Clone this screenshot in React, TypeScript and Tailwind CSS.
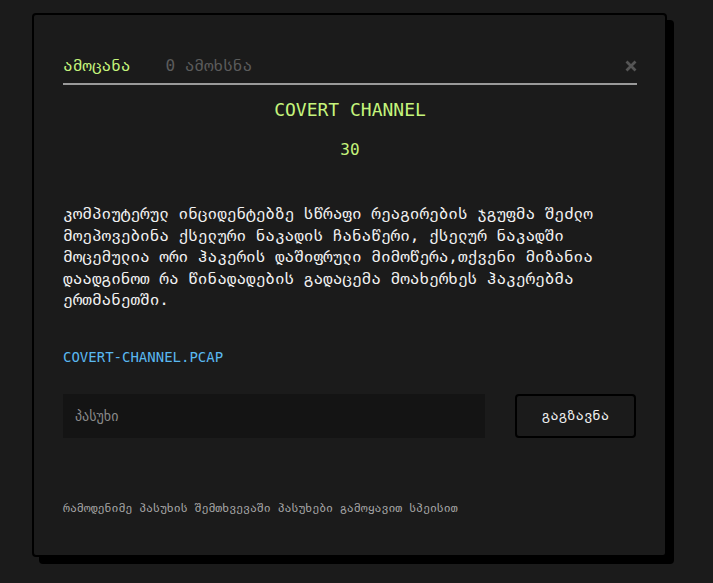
import React from "react";

const mono = { fontFamily: '"DejaVu Sans Mono", "Liberation Mono", monospace' };

const App = () => {
  return (
    <div className="min-h-screen w-full bg-[#1b1b1b] pt-[13px] pl-[32px]" style={mono}>
      {/* modal */}
      <div className="w-[635px] h-[544px] rounded-[4px] border-2 border-black bg-[#1b1b1b] shadow-[7px_7px_0_0_#000] pl-[29px] pr-[28px] pt-[39px]">
        {/* tabs */}
        <div className="flex items-center justify-between border-b-2 border-[#9a9a9a] pb-[5px]">
          <div className="flex items-center text-[16px] leading-[24px]">
            <span className="text-[#c5f47c]">ამოცანა</span>
            <span className="ml-[35px] text-[#5c5c5c]">0 ამოხსნა</span>
          </div>
          <svg width="12" height="12" viewBox="0 0 12 12" className="mr-[0px] mb-[1px]">
            <path d="M1.5 1.5 L10.5 10.5 M10.5 1.5 L1.5 10.5" stroke="#555" strokeWidth="2.8" />
          </svg>
        </div>

        <h2 className="mt-[13px] text-center text-[18px] leading-[24px] text-[#c5f47c]">COVERT CHANNEL</h2>
        <div className="mt-[16px] text-center text-[16px] leading-[24px] text-[#c5f47c]">30</div>

        <p className="mt-[41px] text-[16px] leading-[21.5px] text-[#f2f2f2] font-medium">
          კომპიუტერულ ინციდენტებზე სწრაფი რეაგირების ჯგუფმა შეძლო მოეპოვებინა ქსელური ნაკადის ჩანაწერი, ქსელურ ნაკადში მოცემულია ორი ჰაკერის დაშიფრული მიმოწერა,თქვენი მიზანია დაადგინოთ რა წინადადების გადაცემა მოახერხეს ჰაკერებმა ერთმანეთში.
        </p>

        <a className="mt-[36px] block text-[14px] leading-[20px] text-[#5ab8f0]">COVERT-CHANNEL.PCAP</a>

        <div className="mt-[27px] flex items-center gap-[30px]">
          <input
            placeholder="პასუხი"
            className="h-[44px] w-[422px] bg-[#141414] px-[12px] text-[14px] text-[#ddd] placeholder:text-[#8a8a8a] outline-none"
            style={{ fontFamily: '"DejaVu Sans", sans-serif' }}
          />
          <button className="h-[44px] w-[121px] rounded-[4px] border-2 border-black bg-[#1b1b1b] text-[14px] text-[#f2f2f2]">
            გაგზავნა
          </button>
        </div>

        <div className="mt-[62px] text-[11.5px] leading-[16px] text-[#a8a8a8]">
          რამოდენიმე პასუხის შემთხვევაში პასუხები გამოყავით სპეისით
        </div>
      </div>
    </div>
  );
};

export default App;
